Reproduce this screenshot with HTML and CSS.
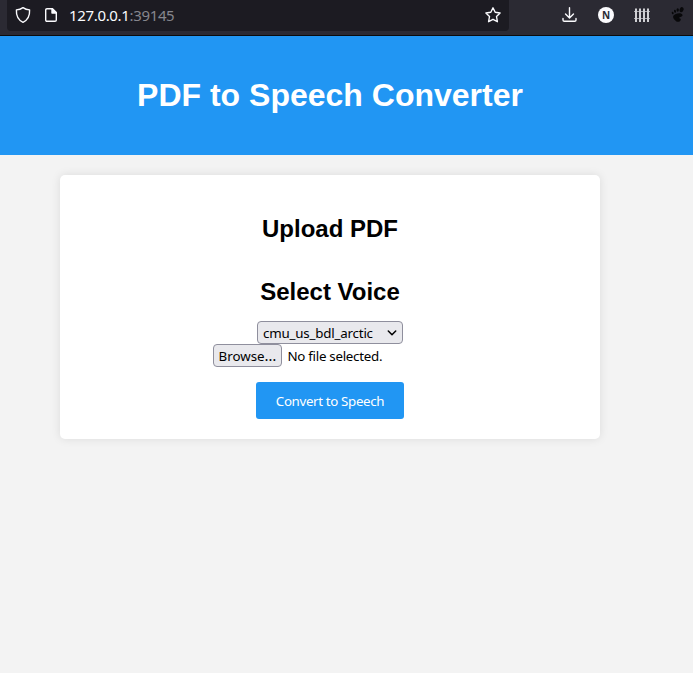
FILE: index.html
```html
<!DOCTYPE html>
<html lang="en">
<head>
<meta charset="utf-8">
<title>PDF to Speech Converter</title>
<link rel="stylesheet" href="styles.css">
</head>
<body>
<div class="toolbar">
  <div class="urlbar">
    <svg class="shield" width="16" height="18" viewBox="0 0 16 18"><path d="M8 1.6C6 3 3.8 3.7 1.4 3.9C1.1 9.5 3 14 8 16.3C13 14 14.900 9.500 14.600 3.900C12.200 3.700 10 3 8 1.600Z"/></svg>
    <svg class="page" width="12" height="14" viewBox="0 0 12 14"><path d="M2 .7H7.500L11.300 4.500V12Q11.300 13.300 10 13.300H2Q.7 13.300 .7 12V2Q.7 .7 2 .7Z"/><path class="solid" d="M7 .7V5H11.300Z"/></svg>
    <span class="address">127.0.0.1<span class="port">:39145</span></span>
    <svg class="star" width="18" height="18" viewBox="0 0 18 18"><path d="M9 1.800L11.200 6.300L16.100 7L12.500 10.500L13.400 15.700L9 13.300L4.600 15.700L5.500 10.500L1.900 7L6.800 6.300Z"/></svg>
  </div>
  <div class="tools">
    <svg class="download" width="16" height="16" viewBox="0 0 16 16"><path d="M7.500 .7V10.500M3.500 7L7.500 11L11.500 7M1 11.500V13Q1 14.300 2.300 14.300H12.700Q14 14.300 14 13V11.500"/></svg>
    <span class="badge">N</span>
    <svg width="16" height="16" viewBox="0 0 16 16"><path class="rail" d="M0 4.500H16M0 11.500H16"/><path class="fence" d="M2 1.500V15M6 1.500V15M10 1.500V15M14 1.500V15"/></svg>
    <svg class="foot" width="14" height="16" viewBox="0 0 14 16"><ellipse cx="10.600" cy="2.700" rx="1.900" ry="2.600" transform="rotate(20 10.600 2.700)"/><ellipse cx="6.700" cy="3" rx="1.200" ry="1.800"/><ellipse cx="4" cy="4.300" rx="1" ry="1.500" transform="rotate(-15 4 4.300)"/><ellipse cx="1.700" cy="6" rx=".9" ry="1.300" transform="rotate(-25 1.700 6)"/><path d="M2.500 8.500C4 6 11 5 11.500 8C11.800 10 8.500 9.700 8.200 10.700C8 11.600 10 11 9.800 12.500C9.500 15 6.500 15.400 4.800 13.900C3.200 12.500 1.300 10.700 2.500 8.500Z"/></svg>
  </div>
</div>
<header class="banner"><h1>PDF to Speech Converter</h1></header>
<main class="card">
  <h2>Upload PDF</h2>
  <h2 class="voice">Select Voice</h2>
  <div class="select"><span>cmu_us_bdl_arctic</span><svg width="10" height="6" viewBox="0 0 10 6"><path d="M1.300 1L5 4.700L8.700 1"/></svg></div>
  <div class="file"><span class="browse">Browse<span class="dots">…</span></span><span class="filename">No file selected.</span></div>
  <button class="convert" type="button">Convert to Speech</button>
</main>
</body>
</html>
```
FILE: styles.css
```css
* { box-sizing: border-box; }
body {
  margin: 0;
  height: 673px;
  overflow: hidden;
  background: #f3f3f3;
  font-family: "Liberation Sans", Arial, sans-serif;
  color: #000;
}
svg { display: block; flex: none; fill: none; stroke: #fbfbfe; stroke-width: 1.4; stroke-linecap: round; stroke-linejoin: round; }
.toolbar {
  display: flex;
  height: 36px;
  background: #2b2a33;
  border-bottom: 1px solid #0c0c0d;
}
.urlbar {
  display: flex;
  align-items: center;
  width: 502px;
  height: 31px;
  margin-left: 7px;
  padding: 0 7px 1px 8px;
  background: #1c1b22;
  border-radius: 0 0 4px 4px;
}
.page { margin-left: 14px; }
.page .solid { fill: #fbfbfe; }
.address {
  margin-left: 12px;
  font: 15px/30px "Noto Sans", sans-serif;
  letter-spacing: -.34px;
  color: #fbfbfe;
}
.port { color: #86868d; }
.star { margin-left: auto; }
.tools {
  display: flex;
  align-items: center;
  height: 30px;
  margin-left: 53px;
}
.badge {
  width: 16px;
  height: 16px;
  margin: 0 20px;
  border-radius: 50%;
  background: #fbfbfe;
  color: #2b2a33;
  font: bold 10px/16px "Noto Sans", sans-serif;
  text-align: center;
}
.tools .fence { stroke: #d0d0d4; stroke-width: 2; stroke-linecap: butt; }
.tools .rail { stroke: #a6a6ac; stroke-width: 1.2; stroke-linecap: butt; }
.tools .foot { margin-left: 21px; fill: #08080a; stroke: none; }
.banner {
  height: 119px;
  padding: 41px 33px 0 0;
  background: #2196f3;
  color: #fff;
  text-align: center;
}
h1 { margin: 0; font-size: 32px; line-height: 37px; }
.card {
  display: flex;
  flex-direction: column;
  align-items: center;
  width: 540px;
  height: 264px;
  margin: 20px 0 0 60px;
  padding-top: 40px;
  background: #fff;
  border-radius: 5px;
  box-shadow: 0 0 10px rgba(0, 0, 0, .1);
}
h2 { margin: 0; font-size: 24px; line-height: 27px; }
.voice { margin: 36px 0 16px; }
.select, .file, .convert { font: 13.333px/23px "Noto Sans", sans-serif; }
.select {
  display: flex;
  justify-content: space-between;
  width: 146px;
  height: 23px;
  padding: 0 5px;
  border: 1px solid #8f8f9d;
  border-radius: 4px;
  background: #e9e9ed;
  letter-spacing: -.19px;
}
.select svg { margin-top: 8px; stroke: #000; stroke-width: 1.5; }
.file { display: flex; width: 234px; height: 23px; white-space: nowrap; }
.browse {
  width: 69px;
  padding-left: 4.5px;
  border: 1px solid #8f8f9d;
  border-radius: 4px;
  background: #e9e9ed;
}
.dots { letter-spacing: 0; font-size: 15px; line-height: 1; }
.filename { margin-left: 5.500px; padding-top: 1px; letter-spacing: -.28px; }
.convert {
  width: 148px;
  height: 37px;
  margin-top: 15px;
  padding: 2px 0 0;
  border: 0;
  border-radius: 3px;
  background: #2196f3;
  color: #fff;
  letter-spacing: -.35px;
  white-space: nowrap;
}
```
